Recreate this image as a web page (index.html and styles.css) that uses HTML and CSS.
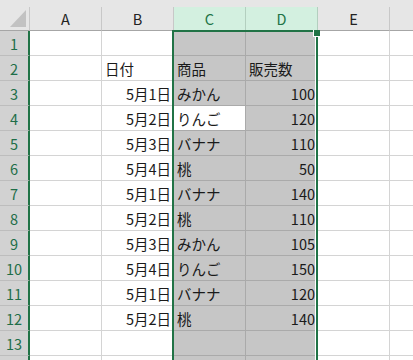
FILE: index.html
```html
<!DOCTYPE html>
<html lang="ja">

<head>
    <meta charset="UTF-8">
    <meta name="viewport" content="width=device-width, initial-scale=1.0">
    <title>Sheet1</title>
    <link rel="stylesheet" href="styles.css">
</head>

<body>

    <div class="sheet">
        <div class="band"></div>

        <div class="row head">
            <div class="corner">
                <svg width="29" height="23" viewBox="0 0 29 23"><polygon points="10,20 26,20 26,3" fill="#c2c2c2" /></svg>
            </div>
            <div class="col">A</div>
            <div class="col">B</div>
            <div class="col picked">C</div>
            <div class="col picked">D</div>
            <div class="col">E</div>
            <div class="col"></div>
        </div>

        <div class="row">
            <div class="rh">1</div>
            <div class="c"></div><div class="c"></div>
            <div class="c sel"></div><div class="c sel"></div>
            <div class="c"></div><div class="c"></div>
        </div>
        <div class="row">
            <div class="rh">2</div>
            <div class="c"></div><div class="c">日付</div>
            <div class="c sel">商品</div><div class="c sel">販売数</div>
            <div class="c"></div><div class="c"></div>
        </div>
        <div class="row">
            <div class="rh">3</div>
            <div class="c"></div><div class="c num">5月1日</div>
            <div class="c sel">みかん</div><div class="c sel num">100</div>
            <div class="c"></div><div class="c"></div>
        </div>
        <div class="row">
            <div class="rh">4</div>
            <div class="c"></div><div class="c num">5月2日</div>
            <div class="c sel active">りんご</div><div class="c sel num">120</div>
            <div class="c"></div><div class="c"></div>
        </div>
        <div class="row">
            <div class="rh">5</div>
            <div class="c"></div><div class="c num">5月3日</div>
            <div class="c sel">バナナ</div><div class="c sel num">110</div>
            <div class="c"></div><div class="c"></div>
        </div>
        <div class="row">
            <div class="rh">6</div>
            <div class="c"></div><div class="c num">5月4日</div>
            <div class="c sel">桃</div><div class="c sel num">50</div>
            <div class="c"></div><div class="c"></div>
        </div>
        <div class="row">
            <div class="rh">7</div>
            <div class="c"></div><div class="c num">5月1日</div>
            <div class="c sel">バナナ</div><div class="c sel num">140</div>
            <div class="c"></div><div class="c"></div>
        </div>
        <div class="row">
            <div class="rh">8</div>
            <div class="c"></div><div class="c num">5月2日</div>
            <div class="c sel">桃</div><div class="c sel num">110</div>
            <div class="c"></div><div class="c"></div>
        </div>
        <div class="row">
            <div class="rh">9</div>
            <div class="c"></div><div class="c num">5月3日</div>
            <div class="c sel">みかん</div><div class="c sel num">105</div>
            <div class="c"></div><div class="c"></div>
        </div>
        <div class="row">
            <div class="rh">10</div>
            <div class="c"></div><div class="c num">5月4日</div>
            <div class="c sel">りんご</div><div class="c sel num">150</div>
            <div class="c"></div><div class="c"></div>
        </div>
        <div class="row">
            <div class="rh">11</div>
            <div class="c"></div><div class="c num">5月1日</div>
            <div class="c sel">バナナ</div><div class="c sel num">120</div>
            <div class="c"></div><div class="c"></div>
        </div>
        <div class="row">
            <div class="rh">12</div>
            <div class="c"></div><div class="c num">5月2日</div>
            <div class="c sel">桃</div><div class="c sel num">140</div>
            <div class="c"></div><div class="c"></div>
        </div>
        <div class="row">
            <div class="rh">13</div>
            <div class="c"></div><div class="c"></div>
            <div class="c sel"></div><div class="c sel"></div>
            <div class="c"></div><div class="c"></div>
        </div>
        <div class="row">
            <div class="rh"></div>
            <div class="c"></div><div class="c"></div>
            <div class="c sel"></div><div class="c sel"></div>
            <div class="c"></div><div class="c"></div>
        </div>

        <!-- selection outline + fill handle -->
        <div class="selection"></div>
        <div class="handle"></div>
    </div>

</body>

</html>
```

FILE: styles.css
```css
* {
    padding: 0;
    margin: 0;
    box-sizing: border-box;
}

body {
    width: 413px;
    height: 360px;
    overflow: hidden;
    background-color: #fff;
    font-family: "Noto Sans CJK JP", "Noto Sans", sans-serif;
    font-size: 14.5px;
    color: #1a1a1a;
}

.sheet {
    position: relative;
    width: 413px;
    height: 360px;
    overflow: hidden;
}

.band {
    height: 7px;
    background-color: #e6e6e6;
}

.row {
    display: flex;
}

.head {
    height: 24px;
}

.corner {
    flex: none;
    width: 30px;
    height: 24px;
    background-color: #e6e6e6;
    border-right: 1px solid #c8c8c8;
    border-bottom: 1px solid #a6a6a6;
}

.corner svg {
    display: block;
}

.col {
    flex: none;
    width: 72px;
    height: 24px;
    background-color: #e6e6e6;
    border-right: 1px solid #c8c8c8;
    border-bottom: 1px solid #a6a6a6;
    display: flex;
    justify-content: center;
    align-items: center;
    color: #222;
}

.col.picked {
    background-color: #d3f0e0;
    border-right-color: #b3cfbf;
    border-bottom-color: #217346;
    color: #217346;
}

.rh {
    flex: none;
    width: 30px;
    height: 25px;
    background-color: #d2d2d2;
    border-right: 2px solid #217346;
    border-bottom: 1px solid #bdbdbd;
    display: flex;
    justify-content: center;
    align-items: center;
    color: #1e6e48;
}

.c {
    flex: none;
    width: 72px;
    height: 25px;
    padding: 0 3px;
    border-right: 1px solid #d4d4d4;
    border-bottom: 1px solid #d4d4d4;
    display: flex;
    align-items: center;
    white-space: nowrap;
}

.num {
    justify-content: flex-end;
    padding-right: 2px;
}

.sel {
    background-color: #c6c6c6;
    border-color: #aaaaaa;
}

.sel.active {
    background-color: #fff;
}

.selection {
    position: absolute;
    left: 172px;
    top: 30px;
    width: 146px;
    height: 330px;
    border: 2px solid #217346;
    border-bottom: none;
    box-shadow: inset -1px 0 0 #fff;
    pointer-events: none;
}

.handle {
    position: absolute;
    left: 313px;
    top: 30px;
    width: 7px;
    height: 7px;
    background-color: #217346;
    border-left: 1px solid #fff;
    border-bottom: 1px solid #fff;
}
```
